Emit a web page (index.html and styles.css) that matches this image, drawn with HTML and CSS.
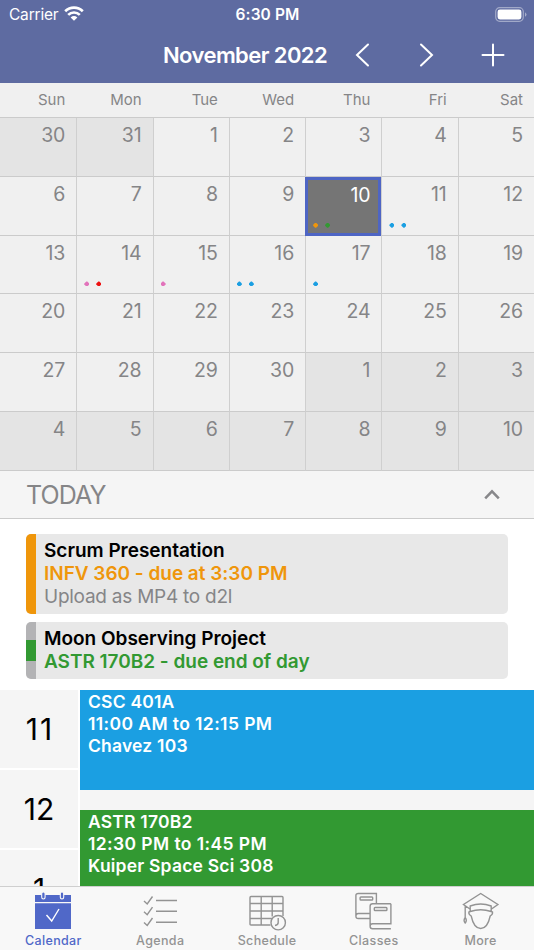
FILE: index.html
```
<!DOCTYPE html>
<html lang="en">
<head>
<meta charset="utf-8">
<title>Calendar</title>
<link rel="stylesheet" href="styles.css">
</head>
<body>
<div class="app">
  <header class="header">
    <div class="status">
      <div class="carrier"><span>Carrier</span>
        <svg width="20" height="15" viewBox="0 0 20 15" fill="none" stroke="#fff" stroke-width="2.700"><path d="M1.200 5.300C6.200.500 13.800.500 18.800 5.300M4.200 8.900c3.300-3.200 8.300-3.200 11.600 0"/><path d="M6.600 11.400q3.400-2.900 6.800 0L10 14.800z" fill="#fff" stroke="none"/></svg>
      </div>
      <div class="clock">6:30 PM</div>
      <svg class="battery" width="32" height="15" viewBox="0 0 32 15"><rect x=".7" y=".7" width="27.6" height="13.6" rx="4" fill="none" stroke="#fff" stroke-opacity=".42" stroke-width="1.2"/><rect x="2.6" y="2.6" width="23.8" height="9.8" rx="2.4" fill="#fff"/><path d="M30 5.2q3 2.3 0 4.6z" fill="#fff" fill-opacity=".45"/></svg>
    </div>
    <div class="nav">
      <h1>November 2022</h1>
      <svg class="prev" width="15" height="24" viewBox="0 0 15 24"><path d="M13 1.500 2 12 13 22.500"/></svg>
      <svg class="next" width="15" height="24" viewBox="0 0 15 24"><path d="M2 1.500 13 12 2 22.500"/></svg>
      <svg class="add" width="24" height="24" viewBox="0 0 24 24"><path d="M12 1.500v21M1.500 12h21"/></svg>
    </div>
  </header>
  <div class="weekdays"><span>Sun</span><span>Mon</span><span>Tue</span><span>Wed</span><span>Thu</span><span>Fri</span><span>Sat</span></div>
  <div class="month">
    <div class="day out">30</div><div class="day out">31</div><div class="day">1</div><div class="day">2</div><div class="day">3</div><div class="day">4</div><div class="day">5</div>
    <div class="day">6</div><div class="day">7</div><div class="day">8</div><div class="day">9</div>
    <div class="day today">10<div class="dots"><i class="dot orange"></i><i class="dot green"></i></div></div>
    <div class="day">11<div class="dots"><i class="dot blue"></i><i class="dot blue"></i></div></div>
    <div class="day">12</div>
    <div class="day">13</div>
    <div class="day">14<div class="dots"><i class="dot pink"></i><i class="dot red"></i></div></div>
    <div class="day">15<div class="dots"><i class="dot pink"></i></div></div>
    <div class="day">16<div class="dots"><i class="dot blue"></i><i class="dot blue"></i></div></div>
    <div class="day">17<div class="dots"><i class="dot blue"></i></div></div>
    <div class="day">18</div><div class="day">19</div>
    <div class="day">20</div><div class="day">21</div><div class="day">22</div><div class="day">23</div><div class="day">24</div><div class="day">25</div><div class="day">26</div>
    <div class="day">27</div><div class="day">28</div><div class="day">29</div><div class="day">30</div><div class="day out">1</div><div class="day out">2</div><div class="day out">3</div>
    <div class="day out">4</div><div class="day out">5</div><div class="day out">6</div><div class="day out">7</div><div class="day out">8</div><div class="day out">9</div><div class="day out">10</div>
  </div>
  <div class="section"><h2>TODAY</h2>
    <svg width="16" height="11" viewBox="0 0 16 11" fill="none" stroke="#87878a" stroke-width="2.500"><path d="m1.200 9.300 6.800-7 6.800 7"/></svg>
  </div>
  <div class="tasks">
    <article class="task task-tall">
      <div class="stripe orange"></div>
      <div class="task-text"><b>Scrum Presentation</b><b class="orange-text">INFV 360 - due at 3:30 PM</b><span class="note">Upload as MP4 to d2l</span></div>
    </article>
    <article class="task task-short">
      <div class="stripe split"></div>
      <div class="task-text"><b>Moon Observing Project</b><b class="green-text">ASTR 170B2 - due end of day</b></div>
    </article>
  </div>
  <div class="timeline">
    <div class="hours"><div class="hour eleven">11</div><div class="hour">12</div><div class="hour">1</div></div>
    <div class="events">
      <div class="event blue"><span>CSC 401A</span><span class="time">11:00 AM to 12:15 PM</span><span>Chavez 103</span></div>
      <div class="event green"><span>ASTR 170B2</span><span class="time">12:30 PM to 1:45 PM</span><span>Kuiper Space Sci 308</span></div>
    </div>
  </div>
  <nav class="tabs">
    <div class="tab active">
      <svg width="40" height="40" viewBox="0 0 40 40"><path d="M2 4h36v7H2zM2 12.300h36V38H2z" fill="#5068c8"/><rect x="8.700" y="1" width="3.400" height="7" rx="1.700" fill="#5068c8" stroke="#f8f8f8" stroke-width="1.100"/><rect x="27.300" y="1" width="3.400" height="7" rx="1.700" fill="#5068c8" stroke="#f8f8f8" stroke-width="1.100"/><path d="m13.500 24 5.200 6L26 18" fill="none" stroke="#fff" stroke-width="1.400"/></svg>
      <span>Calendar</span>
    </div>
    <div class="tab">
      <svg width="40" height="40" viewBox="0 0 40 40"><path d="M16 9.500h21M16 20.300h21M16 31.200h21M4 10l3.200 3L12.500 5.500M4 20.700l3.200 3 5.300-7.500M4 31.500l3.200 3 5.300-7.500"/></svg>
      <span>Agenda</span>
    </div>
    <div class="tab">
      <svg width="40" height="40" viewBox="0 0 40 40"><path d="M23.500 34H4q-1 0-1-1V6.500q0-1 1-1h31q1 0 1 1V25M3 12.500h33M3 20h33M3 27.500h22M14.200 5.500V34M25.200 5.500v20"/><circle cx="31.200" cy="31.700" r="7.200"/><path d="M31.200 27v4.500q0 2.500-3.200 3"/></svg>
      <span>Schedule</span>
    </div>
    <div class="tab">
      <svg width="40" height="40" viewBox="0.600 0 40 40"><path d="M16.500 27.500H5q-2.500 0-2.500-2.500V4.500Q2.500 2.500 5 2.500h18V12M2.500 25Q2.500 22.500 5 22.500h11.500M7.500 6h11q.8 0 .8.800v1.400q0 .8-.8.800h-11q-.8 0-.8-.8V6.800q0-.8.8-.8zM37.500 12.700H19.200q-2.500 0-2.500 2.500v20q0 2.500 2.500 2.500h18.300M37.500 12.700v20H19.200q-2.500 0-2.500 2.500M21.700 16.500h11q.8 0 .8.800v1.400q0 .8-.8.800h-11q-.8 0-.8-.8v-1.400q0-.8.8-.8z"/></svg>
      <span>Classes</span>
    </div>
    <div class="tab">
      <svg width="40" height="40" viewBox="0.300 0 40 40"><path d="M9.200 18 2.800 13.500 20 2.500l17.200 11L30.800 18M9.500 20.500V15Q20 11 30.500 15v5.500Q20 17 9.500 20.500M9.500 20.500l-1.300.5q-.5 2.500 2.300 4C12 32 15.500 37.500 20 37.500S28 32 29.500 25q2.800-1.500 2.300-4l-1.300-.5M4.500 14.500v12M4.500 26.500q-2.200 3 0 5.500 2.200-2.500 0-5.500z"/></svg>
      <span>More</span>
    </div>
  </nav>
</div>
</body>
</html>
```
FILE: styles.css
```
* { box-sizing: border-box; }
body { margin: 0; font-family: Inter, "Liberation Sans", sans-serif; background: #fff; }
.app { width: 534px; height: 950px; display: flex; flex-direction: column; overflow: hidden; }
svg { display: block; flex: none; }
h1, h2 { margin: 0; }

.header { height: 83px; flex: none; background: #5e6ba1; color: #fff; }
.status { height: 27px; display: grid; grid-template-columns: 1fr auto 1fr; align-items: center; padding: 1px 7px 0 9px; font-size: 15.5px; }
.carrier { display: flex; gap: 6px; align-items: center; letter-spacing: -.2px; }
.carrier svg { margin-top: -2px; }
.clock { font-weight: 600; letter-spacing: .1px; transform: translateX(-.5px); }
.battery { justify-self: end; }
.nav { height: 55px; display: flex; align-items: center; padding-left: 163px; }
.nav svg { fill: none; stroke: #fff; stroke-width: 2; stroke-linecap: round; }
h1 { width: 192px; font-size: 22px; font-weight: 600; white-space: nowrap; letter-spacing: -.58px; }
.next { margin-left: 49px; }
.add { margin-left: 47px; }

.weekdays { height: 35px; flex: none; display: grid; grid-template-columns: repeat(7, 1fr); background: #f0f0f0; border-bottom: 1px solid #cbcbcb; color: #858587; font-size: 15px; line-height: 34px; text-align: right; }
.weekdays span { padding-right: 11px; }
.month { height: 353px; flex: none; display: grid; grid-template-columns: repeat(7, 1fr); grid-template-rows: repeat(6, 1fr); }
.day { position: relative; border-left: 1px solid #cfcfcf; border-bottom: 1px solid #cbcbcb; background: #f0f0f0; padding: 5px 11px 0 0; text-align: right; color: #858587; font-size: 19.5px; line-height: 24px; letter-spacing: -.1px; }
.day:nth-child(7n + 1) { border-left: 0; }
.out { background: #e4e4e4; }
.today { border: 3px solid #4e65c4; background: #757575; color: #fff; padding: 3px 8px 0 0; }
.dots { position: absolute; left: 7px; bottom: 7px; display: flex; gap: 7px; }
.today .dots { left: 5px; bottom: 5px; }
.dot { width: 5px; height: 5px; clip-path: polygon(40% 0, 60% 0, 100% 40%, 100% 60%, 60% 100%, 40% 100%, 0 60%, 0 40%); }
.orange { background: #ef960b; }
.green { background: #329932; }
.blue { background: #1b9fe2; }
.pink { background: #e273bb; }
.red { background: #ed1010; }

.section { height: 48px; flex: none; display: flex; align-items: center; justify-content: space-between; padding: 0 34px 0 26px; background: #f5f5f5; border-bottom: 1px solid #cbcbcb; }
h2 { font-size: 25px; font-weight: 400; color: #858587; letter-spacing: -.9px; }

.tasks { flex: none; display: flex; flex-direction: column; gap: 8px; height: 171px; padding: 15px 26px 0; }
.task { display: flex; overflow: hidden; border-radius: 5px; background: #e8e8e8; }
.task-tall { height: 80px; }
.task-short { height: 57px; }
.stripe { width: 10px; flex: none; }
.split { background: linear-gradient(#b3b3b5 18px, #329932 18px 39px, #b3b3b5 39px); }
.task-text { display: flex; flex-direction: column; padding: 5px 0 0 8px; font-size: 19px; line-height: 23.2px; white-space: nowrap; }
.task-text b { font-weight: 600; letter-spacing: -.02px; }
.orange-text { color: #ef960b; }
.green-text { color: #329932; }
.note { color: #858587; letter-spacing: -.25px; }

.timeline { height: 196px; flex: none; display: flex; overflow: hidden; }
.hours { width: 78px; margin-right: 2px; display: flex; flex-direction: column; gap: 2px; }
.hour { height: 78px; flex: none; background: #f5f5f5; font-size: 30px; line-height: 79px; text-align: center; }
.eleven { letter-spacing: 2px; text-indent: 2px; }
.events { flex: 1; display: flex; flex-direction: column; gap: 20px; background: #f5f5f5; }
.event { height: 100px; flex: none; display: flex; flex-direction: column; padding: 1px 0 0 8px; color: #fff; font-size: 17.5px; font-weight: 600; line-height: 22px; letter-spacing: .2px; white-space: nowrap; }
.time { letter-spacing: .4px; }

.tabs { height: 64px; flex: none; display: grid; grid-template-columns: repeat(5, 1fr); background: #f8f8f8; border-top: 1px solid #cfcfcf; }
.tab { display: flex; flex-direction: column; align-items: center; padding-top: 4px; color: #939393; font-size: 12.5px; font-weight: 500; line-height: 19px; letter-spacing: .35px; }
.tab svg { fill: none; stroke: #939393; stroke-width: 1.4; }
.tab.active { color: #5068c8; }
.tab.active svg { stroke: none; }
```
